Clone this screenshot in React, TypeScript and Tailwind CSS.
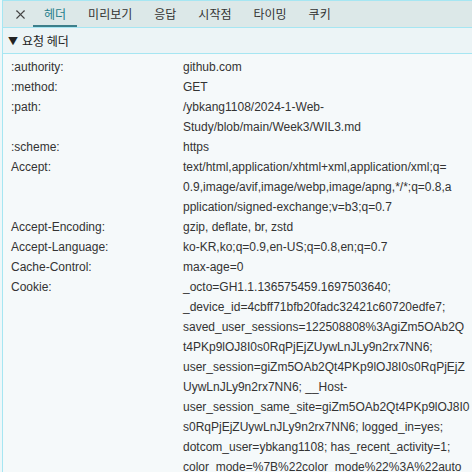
import { X } from "lucide-react";

const tabs = ["헤더", "미리보기", "응답", "시작점", "타이밍", "쿠키"];

const rows: [string, string[]][] = [
  [":authority:", ["github.com"]],
  [":method:", ["GET"]],
  [":path:", ["/ybkang1108/2024-1-Web-", "Study/blob/main/Week3/WIL3.md"]],
  [":scheme:", ["https"]],
  [
    "Accept:",
    [
      "text/html,application/xhtml+xml,application/xml;q=",
      "0.9,image/avif,image/webp,image/apng,*/*;q=0.8,a",
      "pplication/signed-exchange;v=b3;q=0.7",
    ],
  ],
  ["Accept-Encoding:", ["gzip, deflate, br, zstd"]],
  ["Accept-Language:", ["ko-KR,ko;q=0.9,en-US;q=0.8,en;q=0.7"]],
  ["Cache-Control:", ["max-age=0"]],
  [
    "Cookie:",
    [
      "_octo=GH1.1.136575459.1697503640;",
      "_device_id=4cbff71bfb20fadc32421c60720edfe7;",
      "saved_user_sessions=122508808%3AgiZm5OAb2Q",
      "t4PKp9lOJ8I0s0RqPjEjZUywLnJLy9n2rx7NN6;",
      "user_session=giZm5OAb2Qt4PKp9lOJ8I0s0RqPjEjZ",
      "UywLnJLy9n2rx7NN6; __Host-",
      "user_session_same_site=giZm5OAb2Qt4PKp9lOJ8I0",
      "s0RqPjEjZUywLnJLy9n2rx7NN6; logged_in=yes;",
      "dotcom_user=ybkang1108; has_recent_activity=1;",
      "color_mode=%7B%22color_mode%22%3A%22auto",
    ],
  ],
];

export default function App() {
  return (
    <div
      className="relative w-[472px] h-[472px] overflow-hidden bg-[#f5f9fa] text-[#333]"
      style={{ fontFamily: '"Liberation Sans", "Noto Sans CJK KR", sans-serif' }}
    >
      <div className="flex h-full">
        <div className="w-[2px] bg-[#eef7f9] shrink-0" />
        <div className="w-[1px] bg-[#a6e6f2] shrink-0" />
        <div className="flex-1 flex flex-col min-w-0">
          {/* Tabs */}
          <div className="h-[28px] shrink-0 bg-[#dce8e8] border-t border-b border-[#a6e6f2] flex items-stretch">
            <div className="w-[30px] pl-[10px] flex items-center">
              <X className="w-[15px] h-[15px] text-[#444]" strokeWidth={1.75} />
            </div>
            {tabs.map((t, i) => (
              <div
                key={t}
                className={`relative flex items-center px-[11px] text-[12px] ${
                  i === 0 ? "text-[#1f7d8a]" : "text-[#333]"
                }`}
                style={{ fontFamily: '"Noto Sans CJK KR", sans-serif' }}
              >
                {t}
                {i === 0 && (
                  <div className="absolute left-0 right-0 bottom-0 h-[2px] bg-[#3d7f8a]" />
                )}
              </div>
            ))}
          </div>
          {/* Section */}
          <div
            className="h-[26px] shrink-0 bg-[#ecf4f6] border-b border-[#a6e6f2] flex items-center pl-[5px] text-[12px] text-[#222]"
            style={{ fontFamily: '"Noto Sans CJK KR", sans-serif' }}
          >
            <span className="text-[10px] mr-[4px]">▼</span>
            요청 헤더
          </div>
          {/* Rows */}
          <div className="pt-[3px] text-[12px] leading-[20px]">
            {rows.map(([k, v]) => (
              <div key={k} className="flex">
                <div className="w-[180px] pl-[8px] shrink-0 whitespace-nowrap">{k}</div>
                <div className="flex-1 whitespace-nowrap">
                  {v.map((l, j) => (
                    <div key={j}>{l}</div>
                  ))}
                </div>
              </div>
            ))}
          </div>
        </div>
      </div>
    </div>
  );
}
